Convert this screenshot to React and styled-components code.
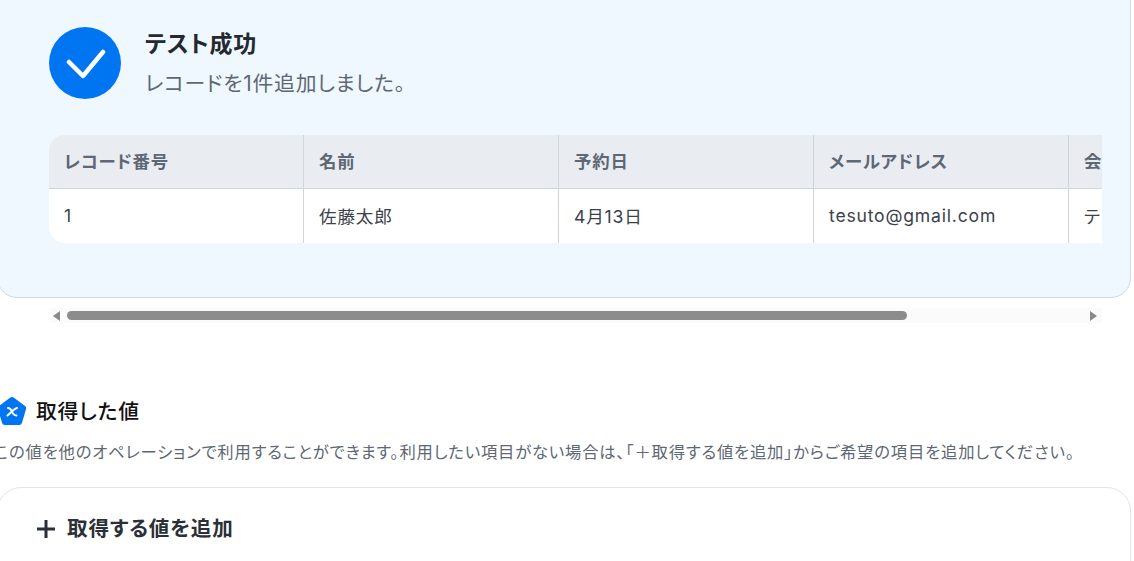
import React from "react"
import styled, { createGlobalStyle } from "styled-components"

const GlobalStyle = createGlobalStyle`
	html, body {
		margin: 0;
		padding: 0;
		background: #fff;
	}
	body {
		font-family: Inter, "Noto Sans CJK JP", "Noto Sans", sans-serif;
		font-feature-settings: "palt";
		letter-spacing: 0.05em;
		color: #24292f;
	}
`

const Page = styled.div`
	width: 1134px;
	height: 561px;
	overflow: hidden;
`

const Inner = styled.div`
	width: 1134px;
	margin-left: -3px;
	margin-top: -21px;
`

const ResultPanel = styled.section`
	box-sizing: border-box;
	width: 1134px;
	height: 319px;
	padding: 47px 28px 0 51px;
	background: #eff7ff;
	border: 1px solid #cfdbe6;
	border-radius: 20px;
`

const Status = styled.div`
	display: flex;
	align-items: center;
	gap: 24px;
`

const StatusIcon = styled.div`
	width: 72px;
	height: 72px;
	border-radius: 50%;
	background: #0075f2;
	display: flex;
	align-items: center;
	justify-content: center;
	flex-shrink: 0;
`

const StatusText = styled.div`
	display: flex;
	flex-direction: column;
	gap: 11px;
`

const StatusTitle = styled.div`
	font-size: 23px;
	font-weight: 700;
	line-height: 30px;
	color: #24292f;
`

const StatusMessage = styled.div`
	font-size: 20.8px;
	line-height: 28px;
	color: #5e6773;
`

const TableScroller = styled.div`
	width: 1053px;
	margin-top: 36px;
	overflow: hidden;
	border-radius: 16px 0 0 16px;
`

const Table = styled.div`
	display: grid;
	grid-template-columns: repeat(5, 255px);
	width: 1275px;
`

const HeadCell = styled.div`
	box-sizing: border-box;
	height: 54px;
	padding: 0 0 2px 15px;
	display: flex;
	align-items: center;
	background: #e9edf2;
	border-right: 1px solid #cfd5de;
	border-bottom: 1px solid #cfd5de;
	font-size: 17.4px;
	font-weight: 700;
	color: #5e6773;
`

const BodyCell = styled.div`
	box-sizing: border-box;
	height: 54px;
	padding: 0 0 1px 15px;
	display: flex;
	align-items: center;
	background: #fff;
	border-right: 1px solid #cfd5de;
	font-size: 17.6px;
	color: #3b424c;
	white-space: nowrap;
`

const ScrollTrack = styled.div`
	display: flex;
	align-items: center;
	box-sizing: border-box;
	width: 1053px;
	height: 15px;
	margin: 10px 0 0 52px;
	padding: 0 5px 0 4px;
	background: #fbfbfb;
`

const ScrollArrow = styled.span`
	width: 0;
	height: 0;
	border-top: 5px solid transparent;
	border-bottom: 5px solid transparent;
	${(p) =>
		p.$side === "left"
			? "border-right: 7px solid #8a8a8a;"
			: "border-left: 7px solid #8a8a8a; margin-left: auto;"}
`

const ScrollThumb = styled.div`
	width: 840px;
	height: 9px;
	margin-left: 7px;
	border-radius: 5px;
	background: #8c8c8c;
`

const Section = styled.section`
	margin-top: 74px;
`

const SectionHeader = styled.div`
	display: flex;
	align-items: center;
	gap: 9px;
	height: 28px;
`

const SectionTitle = styled.h2`
	margin: 0;
	padding-top: 2px;
	font-size: 20.8px;
	font-weight: 500;
	line-height: 28px;
	color: #111;
`

const SectionHint = styled.p`
	margin: 14px 0 0 -3px;
	font-size: 16.35px;
	line-height: 26px;
	color: #5e6773;
	white-space: nowrap;
`

const AddCard = styled.div`
	box-sizing: border-box;
	width: 1134px;
	height: 120px;
	margin-top: 22px;
	padding: 25px 38px;
	background: #fff;
	border: 1px solid #e3e5e8;
	border-radius: 24px;
`

const AddButton = styled.div`
	display: flex;
	align-items: center;
	gap: 11px;
	font-size: 20.6px;
	font-weight: 700;
	line-height: 32px;
	color: #2b3038;
`

const columns = [
	{ head: "レコード番号", value: "1" },
	{ head: "名前", value: "佐藤太郎" },
	{ head: "予約日", value: "4月13日" },
	{ head: "メールアドレス", value: "tesuto@gmail.com" },
	{ head: "会社名", value: "テスト株式会社" },
]

function App() {
	return (
		<Page>
			<GlobalStyle />
			<Inner>
				<ResultPanel>
					<Status>
						<StatusIcon>
							<svg width="44" height="32" viewBox="0 0 44 32" fill="none">
								<path
									d="M6 15 L20 29 L40 5"
									stroke="#fff"
									strokeWidth="4.5"
									strokeLinecap="round"
									strokeLinejoin="round"
								/>
							</svg>
						</StatusIcon>
						<StatusText>
							<StatusTitle>テスト成功</StatusTitle>
							<StatusMessage>レコードを1件追加しました。</StatusMessage>
						</StatusText>
					</Status>
					<TableScroller>
						<Table>
							{columns.map((c) => (
								<HeadCell key={c.head}>{c.head}</HeadCell>
							))}
							{columns.map((c) => (
								<BodyCell key={c.head}>{c.value}</BodyCell>
							))}
						</Table>
					</TableScroller>
				</ResultPanel>
				<ScrollTrack>
					<ScrollArrow $side="left" />
					<ScrollThumb />
					<ScrollArrow $side="right" />
				</ScrollTrack>
				<Section>
					<SectionHeader>
						<svg width="30" height="28" viewBox="0 0 30 28">
							<path
								d="M13 .8 a3.2 3.2 0 0 1 4 0 L28 9 a3 3 0 0 1 1 3.3 L25 25.8 a3 3 0 0 1 -2.9 2.2 H7.9 a3 3 0 0 1 -2.9 -2.2 L1 12.3 a3 3 0 0 1 1 -3.3 Z"
								fill="#0075f2"
							/>
							<path
								d="M11 11 C13.5 11 14 12.5 15 14.5 C16 17 17 18.5 19.5 18.5 M20 11 C17.5 11.5 13.5 16 10.5 18.5"
								stroke="#fff"
								strokeWidth="2"
								strokeLinecap="round"
								fill="none"
							/>
						</svg>
						<SectionTitle>取得した値</SectionTitle>
					</SectionHeader>
					<SectionHint>
						この値を他のオペレーションで利用することができます。利用したい項目がない場合は、「＋取得する値を追加」からご希望の項目を追加してください。
					</SectionHint>
					<AddCard>
						<AddButton>
							<svg width="20" height="20" viewBox="0 0 20 20">
								<path d="M10 1 V19 M1 10 H19" stroke="#2b3038" strokeWidth="3" />
							</svg>
							取得する値を追加
						</AddButton>
					</AddCard>
				</Section>
			</Inner>
		</Page>
	)
}

export default App
